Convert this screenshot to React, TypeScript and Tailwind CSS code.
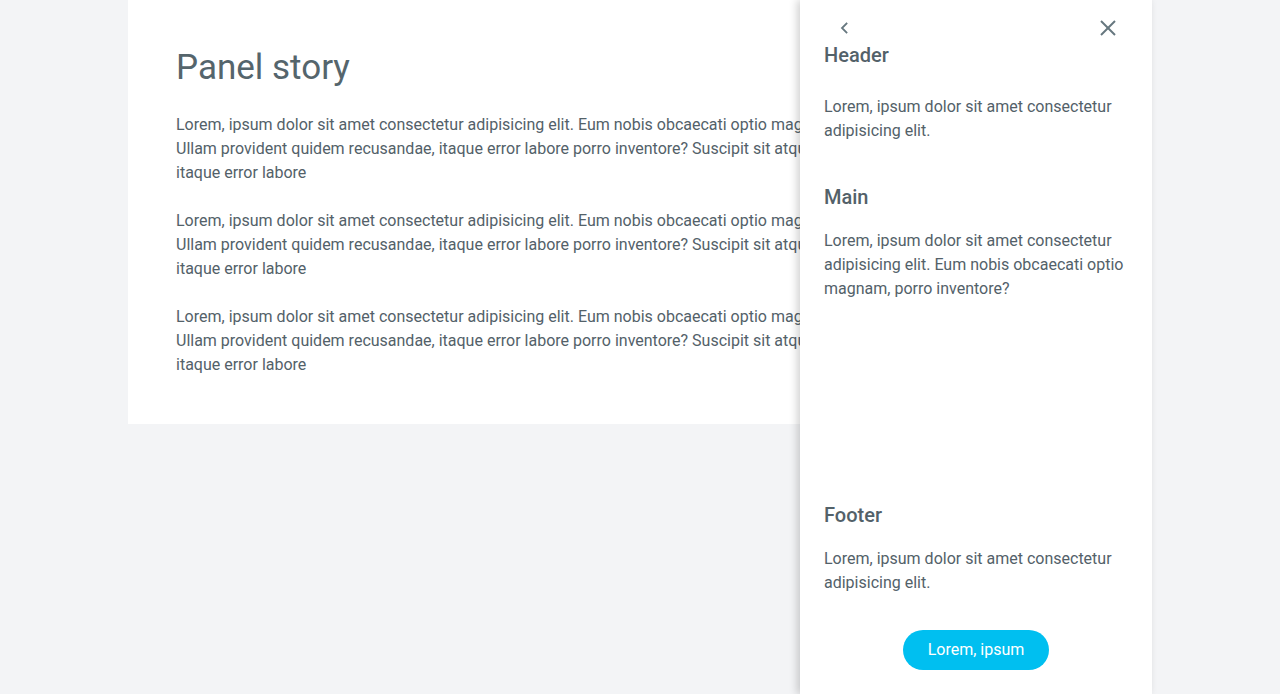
import { FC } from "react";

const font = { fontFamily: "Roboto, 'Noto Sans', Arial, sans-serif" };

const StoryParagraph: FC = () => (
  <p className="text-base leading-6 whitespace-nowrap">
    Lorem, ipsum dolor sit amet consectetur adipisicing elit. Eum nobis obcaecati optio magnam, porro inventore?
    <br />
    Ullam provident quidem recusandae, itaque error labore porro inventore? Suscipit sit atque dolorem quasi,
    <br />
    itaque error labore
  </p>
);

const SidePanel: FC = () => (
  <aside className="absolute top-0 right-0 h-full w-[352px] bg-white shadow-[-3px_0_8px_rgba(0,0,0,0.18)] flex flex-col px-6 text-[#536169]">
    <div className="flex justify-between items-center pt-4 h-10">
      <button type="button" aria-label="Back" className="w-10 h-6 flex items-center justify-center text-[#66777f]">
        <svg width="24" height="24" viewBox="0 0 24 24" fill="none" stroke="currentColor" strokeWidth="1.8" strokeLinecap="square">
          <polyline points="14.5,7.5 10,12 14.5,16.5" />
        </svg>
      </button>
      <button type="button" aria-label="Close" className="w-10 h-6 flex items-center justify-center text-[#66777f]">
        <svg width="24" height="24" viewBox="0 0 24 24" fill="none" stroke="currentColor" strokeWidth="2">
          <line x1="5" y1="5" x2="19" y2="19" />
          <line x1="19" y1="5" x2="5" y2="19" />
        </svg>
      </button>
    </div>
    <h2 className="mt-px text-xl leading-7 font-medium">Header</h2>
    <p className="mt-[26px] text-base leading-6">Lorem, ipsum dolor sit amet consectetur adipisicing elit.</p>

    <h2 className="mt-[40px] text-xl leading-7 font-medium">Main</h2>
    <p className="mt-[18px] text-base leading-6">
      Lorem, ipsum dolor sit amet consectetur adipisicing elit. Eum nobis obcaecati optio magnam, porro inventore?
    </p>

    <div className="flex-1" />

    <h2 className="text-xl leading-7 font-medium">Footer</h2>
    <p className="mt-[18px] text-base leading-6">Lorem, ipsum dolor sit amet consectetur adipisicing elit.</p>
    <div className="mt-[35px] mb-6 flex justify-center">
      <button type="button" className="h-10 w-[146px] rounded-full bg-[#00bff0] text-white text-base">
        Lorem, ipsum
      </button>
    </div>
  </aside>
);

export default function App() {
  return (
    <div className="h-[694px] w-full overflow-hidden bg-[#f3f4f6] text-[#536169]" style={font}>
      <div className="relative mx-auto w-[1024px] h-full">
        <main className="bg-white px-12 pt-12 pb-[47px] overflow-hidden">
          <h1 className="text-[35px] leading-10 font-normal text-[#55656c]">Panel story</h1>
          <div className="mt-[25px] flex flex-col gap-6">
            <StoryParagraph />
            <StoryParagraph />
            <StoryParagraph />
          </div>
        </main>
        <SidePanel />
      </div>
    </div>
  );
}
